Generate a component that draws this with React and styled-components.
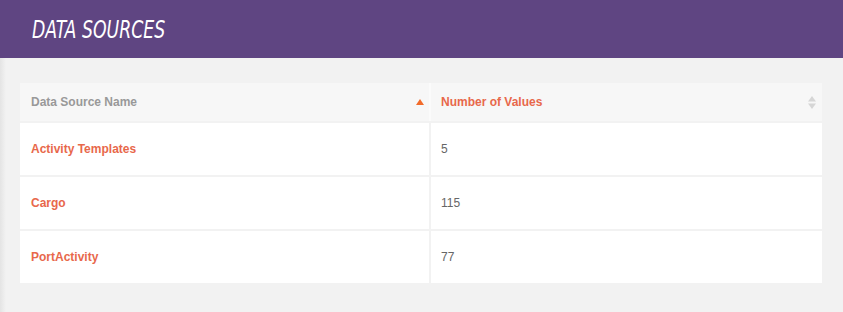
import React from "react";
import styled, { createGlobalStyle } from "styled-components";

const GlobalStyle = createGlobalStyle`
    html, body {
        margin: 0;
        padding: 0;
    }
    body {
        background: linear-gradient(to right, #e4e4e4 0px, #f2f2f2 6px) #f2f2f2;
        font-family: "Liberation Sans", Arial, sans-serif;
        min-height: 312px;
    }
`

const TopBar = styled.div`
    height: 58px;
    background-color: #5f4582;
    display: flex;
    align-items: center;
    padding-left: 32px;
`
const Title = styled.h1`
    margin: 0;
    font-family: "DejaVu Sans", sans-serif;
    font-stretch: condensed;
    font-weight: 400;
    font-style: italic;
    font-size: 25px;
    color: #ffffff;
    padding-top: 1px;
    transform: scaleX(0.77);
    transform-origin: left center;
`
const Content = styled.div`
    padding: 25px 21px 0 20px;
`
const Table = styled.table`
    width: 802px;
    border-collapse: collapse;
    background-color: #ffffff;
    font-size: 12px;
`
const HeadCell = styled.th`
    height: 38px;
    padding: 0 11px 0 ${({first}) => first ? "11px" : "10px"};
    background-color: #f7f7f7;
    text-align: left;
    font-weight: bold;
    color: ${({active}) => active ? "#e8684b" : "#999999"};
    border-bottom: 2px solid #f2f2f2;
    border-right: ${({last}) => last ? "none" : "2px solid #fbfbfb"};
    width: ${({w}) => w};
`
const HeadInner = styled.div`
    display: flex;
    align-items: center;
    justify-content: space-between;
`
const Row = styled.tr`
    border-bottom: 2px solid #f2f2f2;
    &:last-child{
        border-bottom: none;
    }
`
const Cell = styled.td`
    height: 52px;
    padding: 0 11px 0 ${({link}) => link ? "11px" : "10px"};
    color: ${({link}) => link ? "#e8684b" : "#666666"};
    font-weight: ${({link}) => link ? "bold" : "normal"};
    border-right: ${({last}) => last ? "none" : "2px solid #f2f2f2"};
`

const SortUp = () => (
    <svg width="8" height="6" viewBox="0 0 8 6" style={{marginRight: "-6px"}}>
        <path d="M4 0 L8 6 L0 6 Z" fill="#f26b2a"/>
    </svg>
)

const SortBoth = () => (
    <svg width="8" height="13" viewBox="0 0 8 13" style={{marginRight: "-5px"}}>
        <path d="M4 0 L8 5.5 L0 5.5 Z" fill="#d6d6d6"/>
        <path d="M4 13 L8 7.5 L0 7.5 Z" fill="#d6d6d6"/>
    </svg>
)

const rows = [
    {name: "Activity Templates", count: 5},
    {name: "Cargo", count: 115},
    {name: "PortActivity", count: 77},
]

const App = () => {
    return (
        <>
            <GlobalStyle/>
            <TopBar>
                <Title>DATA SOURCES</Title>
            </TopBar>
            <Content>
                <Table>
                    <thead>
                        <tr>
                            <HeadCell first w="387px">
                                <HeadInner>Data Source Name<SortUp/></HeadInner>
                            </HeadCell>
                            <HeadCell active last>
                                <HeadInner>Number of Values<SortBoth/></HeadInner>
                            </HeadCell>
                        </tr>
                    </thead>
                    <tbody>
                        {rows.map(r => (
                            <Row key={r.name}>
                                <Cell link>{r.name}</Cell>
                                <Cell last>{r.count}</Cell>
                            </Row>
                        ))}
                    </tbody>
                </Table>
            </Content>
        </>
    );
}

export default App;
